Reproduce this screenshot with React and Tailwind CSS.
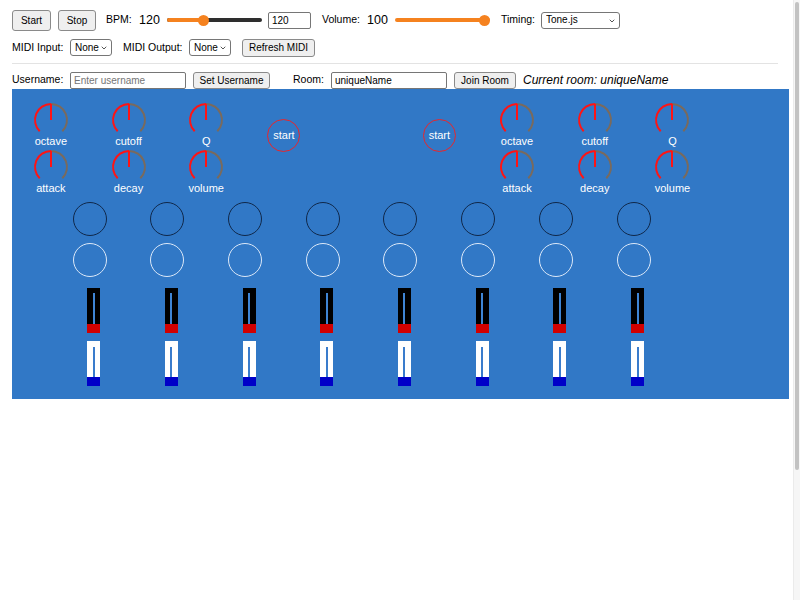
import { ChevronDown } from "lucide-react";

const knobsLeft = [
  ["octave", "cutoff", "Q"],
  ["attack", "decay", "volume"],
];

function Knob({ label }) {
  return (
    <div className="flex flex-col items-center">
      <svg width="36" height="36" viewBox="0 0 36 36">
        <path d="M 6.69 29.31 A 16 16 0 0 1 18 2" fill="none" stroke="#ff1414" strokeWidth="2" />
        <path d="M 18 2 A 16 16 0 0 1 29.31 29.31" fill="none" stroke="#7a6a5c" strokeWidth="2" />
        <line x1="18" y1="2" x2="18" y2="18" stroke="#ff1414" strokeWidth="2" />
      </svg>
      <span className="-mt-[3px] text-[11px] leading-[13px] text-white">{label}</span>
    </div>
  );
}

function StartButton() {
  return (
    <div className="row-span-2 flex justify-center self-start mt-[17px]">
      <button className="w-[33px] h-[33px] rounded-full border border-[#e8262b] bg-transparent text-[11px] text-white flex items-center justify-center">
        start
      </button>
    </div>
  );
}

function Slider({ value }) {
  return (
    <div className="relative w-[95px] h-[14px] flex items-center">
      <div className="w-full h-[4px] rounded-full bg-[#2e2e2e] overflow-hidden">
        <div className="h-full bg-[#f5821f]" style={{ width: `${value * 100}%` }} />
      </div>
      <div
        className="absolute top-[1.5px] w-[11px] h-[11px] rounded-full bg-[#f5821f]"
        style={{ left: `calc(${value} * (100% - 11px))` }}
      />
    </div>
  );
}

function Select({ value, width }) {
  return (
    <div className={`relative ${width} h-[17px] text-[10px] leading-none`}>
      <select className="block appearance-none w-full h-full border border-[#767676] rounded-[3px] bg-white pl-[4px] text-[10px] leading-none">
        <option>{value}</option>
      </select>
      <ChevronDown className="absolute right-[4px] top-[5px] w-[8px] h-[8px] text-[#333] pointer-events-none" strokeWidth={2.5} />
    </div>
  );
}

function Btn({ children, className = "" }) {
  return (
    <button className={`bg-[#efefef] border border-[#8a8a8a] rounded-[3px] text-[10px] text-black flex items-center justify-center ${className}`}>
      {children}
    </button>
  );
}

function SeqColumn() {
  return (
    <div className="w-[77.7px] flex flex-col items-center">
      <div className="w-[34px] h-[34px] rounded-full border-[1.5px] border-[#10284a]" />
      <div className="mt-[7px] w-[34px] h-[34px] rounded-full border-[1.5px] border-[#dbe8f8]" />
      <div className="mt-[11px] ml-2 w-[13px] flex flex-col">
        <div className="h-[36px] bg-black flex justify-center pt-[5px]">
          <div className="w-[2px] h-full bg-[#3f85d4]" />
        </div>
        <div className="h-[9px] bg-[#d20000]" />
      </div>
      <div className="mt-[8px] ml-2 w-[13px] flex flex-col">
        <div className="h-[36px] bg-white flex justify-center pt-[6px]">
          <div className="w-[2px] h-full bg-[#3a7ccc]" />
        </div>
        <div className="h-[9px] bg-[#0000c8]" />
      </div>
    </div>
  );
}

export default function App() {
  return (
    <div className="min-h-screen bg-white text-black font-['Liberation_Sans',Arial,sans-serif]">
      <div className="pl-3 pt-[9px]">
        {/* Transport */}
        <div className="flex items-center h-[22px]">
          <Btn className="w-[39px] h-[21px]">Start</Btn>
          <Btn className="ml-[7px] w-[38px] h-[21px]">Stop</Btn>
          <span className="ml-[10px] w-[33px] text-[10.5px]">BPM:</span>
          <span className="w-[28px] text-[12.5px]">120</span>
          <Slider value={0.37} />
          <input
            defaultValue="120"
            className="ml-[6px] w-[43px] h-[17px] border border-[#767676] rounded-[2px] px-[3px] text-[10px]"
          />
          <span className="ml-[11px] w-[45px] text-[10.5px]">Volume:</span>
          <span className="w-[28px] text-[12.5px]">100</span>
          <Slider value={1} />
          <span className="ml-[11px] w-[40px] text-[10.5px]">Timing:</span>
          <Select value="Tone.js" width="w-[79px]" />
        </div>

        {/* MIDI */}
        <div className="mt-[7px] flex items-center h-[19px]">
          <span className="w-[58px] text-[10.5px]">MIDI Input:</span>
          <Select value="None" width="w-[42px]" />
          <span className="ml-[11px] w-[66px] text-[10.5px]">MIDI Output:</span>
          <Select value="None" width="w-[42px]" />
          <Btn className="ml-[11px] w-[73px] h-[18px]">Refresh MIDI</Btn>
        </div>

        <hr className="mt-[6px] w-[766px] border-t border-[#e3e3e3]" />

        {/* Room */}
        <div className="mt-[7px] flex items-center h-[18px]">
          <span className="w-[58px] text-[10.5px]">Username:</span>
          <input
            placeholder="Enter username"
            className="w-[116px] h-[17px] border border-[#767676] rounded-[2px] px-[3px] text-[10px] placeholder:text-[#757575]"
          />
          <Btn className="ml-[7px] w-[77px] h-[17px]">Set Username</Btn>
          <span className="ml-[23px] w-[38px] text-[10.5px]">Room:</span>
          <input
            defaultValue="uniqueName"
            className="w-[116px] h-[17px] border border-[#767676] rounded-[2px] px-[3px] text-[10px]"
          />
          <Btn className="ml-[7px] w-[62px] h-[17px]">Join Room</Btn>
          <span className="ml-[7px] text-[12px] italic">Current room: uniqueName</span>
        </div>

        {/* Synth panel */}
        <div className="w-[777px] h-[310px] bg-[#3178c6] pt-[13px]">
          <div className="grid grid-cols-10 gap-y-[1px]">
            <div className="col-start-1 row-start-1"><Knob label={knobsLeft[0][0]} /></div>
            <div className="col-start-2 row-start-1"><Knob label={knobsLeft[0][1]} /></div>
            <div className="col-start-3 row-start-1"><Knob label={knobsLeft[0][2]} /></div>
            <div className="col-start-1 row-start-2"><Knob label={knobsLeft[1][0]} /></div>
            <div className="col-start-2 row-start-2"><Knob label={knobsLeft[1][1]} /></div>
            <div className="col-start-3 row-start-2"><Knob label={knobsLeft[1][2]} /></div>
            <div className="col-start-4 row-start-1 row-span-2 flex justify-center"><StartButton /></div>
            <div className="col-start-6 row-start-1 row-span-2 flex justify-center"><StartButton /></div>
            <div className="col-start-7 row-start-1"><Knob label={knobsLeft[0][0]} /></div>
            <div className="col-start-8 row-start-1"><Knob label={knobsLeft[0][1]} /></div>
            <div className="col-start-9 row-start-1"><Knob label={knobsLeft[0][2]} /></div>
            <div className="col-start-7 row-start-2"><Knob label={knobsLeft[1][0]} /></div>
            <div className="col-start-8 row-start-2"><Knob label={knobsLeft[1][1]} /></div>
            <div className="col-start-9 row-start-2"><Knob label={knobsLeft[1][2]} /></div>
          </div>

          <div className="mt-[7px] flex pl-[38.85px]">
            {Array.from({ length: 8 }).map((_, i) => (
              <SeqColumn key={i} />
            ))}
          </div>
        </div>
      </div>

      {/* scrollbar overlay */}
      <div className="fixed top-0 right-0 w-[7px] h-screen bg-[#f6f6f6] border-l border-[#ebebeb]">
        <div className="mt-[2px] ml-[1px] w-[4px] h-[468px] rounded-full bg-[#c2c2c2]" />
      </div>
    </div>
  );
}
